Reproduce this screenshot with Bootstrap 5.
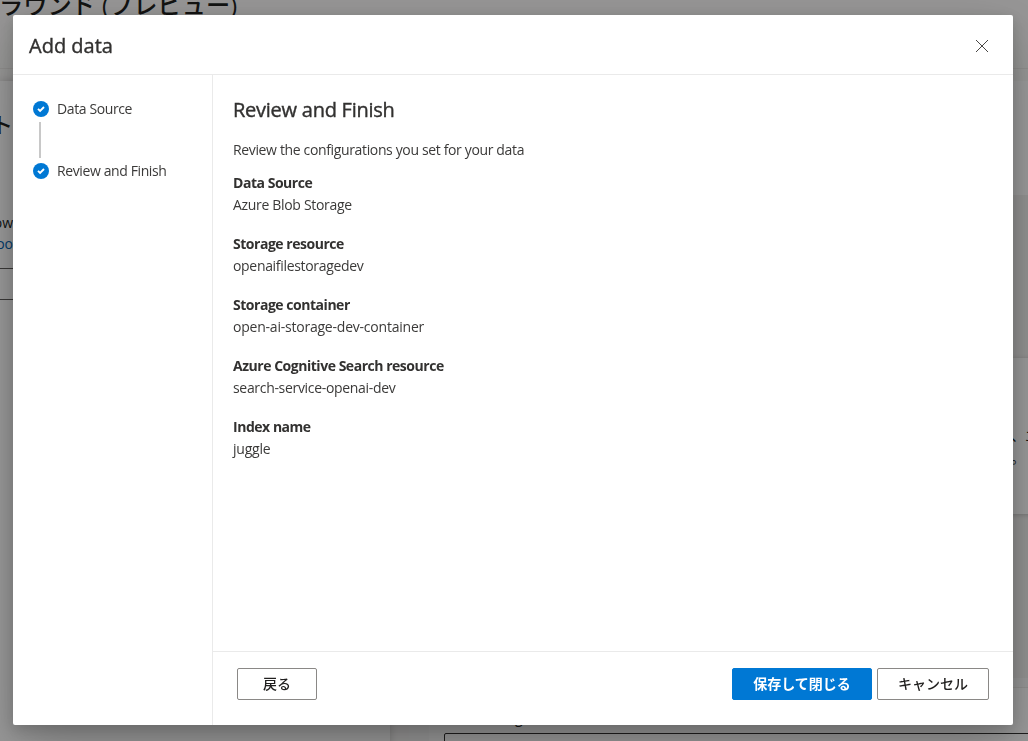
<!DOCTYPE html>
<html lang="ja">
<head>
<meta charset="utf-8">
<meta name="viewport" content="width=device-width, initial-scale=1">
<title>Add data</title>
<link href="https://cdn.jsdelivr.net/npm/bootstrap@5.3.0/dist/css/bootstrap.min.css" rel="stylesheet">
<style>
body{font-family:"Open Sans","Noto Sans CJK JP",sans-serif;font-size:14px;line-height:20px;color:#3b3a39;background:#faf9f8;height:741px;overflow:hidden}
.page{height:741px;color:#201f1e;overflow:hidden}
.page-head{height:69px;border-bottom:1px solid #edebe9}
.page-title{font-size:24.2px;line-height:32px;margin:-11px 0 0 -1px;font-weight:500;white-space:nowrap}
.page-body{margin-top:12px}
.setup{width:390px;background:#fff;box-shadow:0 0 8px rgba(0,0,0,.18)}
.edge{width:13px;line-height:21px;white-space:nowrap}
.edge-heading{height:131px;padding-top:33px;font-size:22px;font-weight:500}
.link{color:#0063b1}
.edge-input{height:32px;margin-top:14px;border-color:#605e5c!important}
.chat{margin-left:19px;background:#fafafa}
.chat-top{height:114px;background:#fff}
.chat-main{height:483px;background:#f3f2f1;padding-top:163px}
.empty-card{height:156px;background:#fff;box-shadow:0 1px 5px rgba(0,0,0,.2);padding:67px 0 0 602px;line-height:22px;white-space:nowrap}
.chat-input{background:#fff;border-top:1px solid #edebe9;margin-left:20px;margin-top:9px;padding:29px 0 0 15px}
.prompt-label{height:16px;line-height:1px;padding-left:71px}
.prompt{height:30px;border:1px solid #323130;border-radius:2px 0 0 0}
.scrim{background:rgba(0,0,0,.4);padding:15px 15px 16px 13px}
.dialog-box{background:#fff;border-radius:2px;box-shadow:0 25.6px 57.6px rgba(0,0,0,.22),0 4.8px 14.4px rgba(0,0,0,.18)}
.rule{border-color:#eaeaea!important}
.dialog-head{height:60px;padding:2px 23px 0 16px}
.title{font-size:20px;line-height:28px;font-weight:400;margin:0;color:#323130;-webkit-text-stroke:.4px #323130}
.main .title{letter-spacing:-.25px}
.steps{width:200px;padding:24px 20px;letter-spacing:-.39px}
.step-line{width:2px;height:36px;background:#c8c8c8;margin:3px 0 3px 6px}
.main{padding:21px 20px 0}
.intro{margin:16px 0 12px;letter-spacing:-.355px}
.field-item{height:61px;line-height:22px}
.field-item dt{font-weight:700;letter-spacing:-.47px;color:#323130}
.field-item dd{margin:0;letter-spacing:-.32px}
.field-item dd.loose{letter-spacing:-.22px}
.actions{height:74px;padding:16px 24px 0}
.actions .btn{height:32px;padding:0;font-size:14px;line-height:28px;border-radius:2px;border-color:#8a8886;color:#201f1e;font-weight:500}
.actions .btn-primary{background:#0078d4;border-color:#0078d4;color:#fff;font-weight:700}
</style>
</head>
<body>
<div class="page d-flex flex-column" aria-hidden="true">
  <header class="page-head flex-shrink-0"><h1 class="page-title">ラウンド (プレビュー)</h1></header>
  <div class="page-body d-flex flex-grow-1">
    <section class="setup flex-shrink-0">
      <div class="edge edge-heading d-flex justify-content-end"><span>ト</span></div>
      <div class="edge d-flex justify-content-end">ow</div>
      <div class="edge link d-flex justify-content-end">oo</div>
      <div class="edge-input border-top border-bottom"></div>
    </section>
    <section class="chat d-flex flex-column flex-grow-1">
      <div class="chat-top flex-shrink-0"></div>
      <div class="chat-main flex-shrink-0"><div class="empty-card">、エ<br>。</div></div>
      <div class="chat-input flex-grow-1 d-flex flex-column"><span class="prompt-label">g</span><div class="prompt"></div></div>
    </section>
  </div>
</div>

<div class="scrim position-fixed top-0 start-0 w-100 h-100 d-flex">
  <div class="dialog-box d-flex flex-column w-100" role="dialog" aria-labelledby="dialogTitle">
    <header class="dialog-head rule border-bottom d-flex align-items-center justify-content-between">
      <h2 class="title" id="dialogTitle">Add data</h2>
      <button class="btn p-0 border-0 lh-1 d-flex" aria-label="Close"><svg width="16" height="16" viewBox="0 0 16 16" fill="none" stroke="#484644" stroke-width="1"><path d="M2 2l12 12M14 2L2 14"/></svg></button>
    </header>
    <div class="d-flex flex-grow-1">
      <nav class="steps rule border-end flex-shrink-0">
        <div class="d-flex align-items-center gap-2"><svg width="16" height="16" viewBox="0 0 16 16"><circle cx="8" cy="8" r="8" fill="#0078d4"/><path d="M5 7.8l2.1 2.1L11 6" fill="none" stroke="#fff" stroke-width="1.9"/></svg><span>Data Source</span></div>
        <div class="step-line"></div>
        <div class="d-flex align-items-center gap-2"><svg width="16" height="16" viewBox="0 0 16 16"><circle cx="8" cy="8" r="8" fill="#0078d4"/><path d="M5 7.8l2.1 2.1L11 6" fill="none" stroke="#fff" stroke-width="1.9"/></svg><span>Review and Finish</span></div>
      </nav>
      <div class="d-flex flex-column flex-grow-1">
        <main class="main flex-grow-1">
          <h3 class="title">Review and Finish</h3>
          <p class="intro">Review the configurations you set for your data</p>
          <dl class="m-0">
            <div class="field-item"><dt>Data Source</dt><dd>Azure Blob Storage</dd></div>
            <div class="field-item"><dt>Storage resource</dt><dd>openaifilestoragedev</dd></div>
            <div class="field-item"><dt>Storage container</dt><dd class="loose">open-ai-storage-dev-container</dd></div>
            <div class="field-item"><dt>Azure Cognitive Search resource</dt><dd>search-service-openai-dev</dd></div>
            <div class="field-item"><dt>Index name</dt><dd class="loose">juggle</dd></div>
          </dl>
        </main>
        <footer class="actions rule border-top d-flex">
          <button class="btn" style="width:80px">戻る</button>
          <button class="btn btn-primary ms-auto" style="width:140px;margin-right:5px">保存して閉じる</button>
          <button class="btn" style="width:112px">キャンセル</button>
        </footer>
      </div>
    </div>
  </div>
</div>
<script src="https://cdn.jsdelivr.net/npm/bootstrap@5.3.0/dist/js/bootstrap.bundle.min.js"></script>
</body>
</html>
